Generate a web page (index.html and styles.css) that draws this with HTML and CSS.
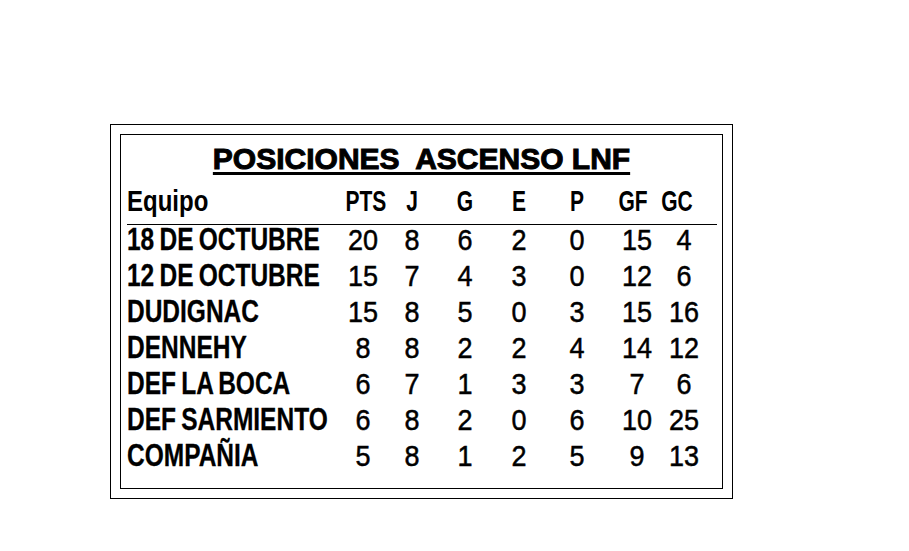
FILE: index.html
```html
<!DOCTYPE html>
<html lang="es">
<head>
<meta charset="utf-8">
<title>Posiciones Ascenso LNF</title>
<link rel="stylesheet" href="styles.css">
</head>
<body>
<div class="frame">
  <div class="panel">
    <h1 class="title"><span class="title-text">POSICIONES&nbsp; ASCENSO LNF</span></h1>
    <div class="table">
      <div class="row head">
        <span class="name">Equipo</span>
        <span class="num">PTS</span>
        <span class="num">J</span>
        <span class="num">G</span>
        <span class="num">E</span>
        <span class="num">P</span>
        <span class="num gf">GF</span>
        <span class="num gc">GC</span>
        <span></span>
      </div>
      <div class="row"><span class="name">18 DE OCTUBRE</span><span class="num">20</span><span class="num">8</span><span class="num">6</span><span class="num">2</span><span class="num">0</span><span class="num">15</span><span class="num">4</span><span></span></div>
      <div class="row"><span class="name">12 DE OCTUBRE</span><span class="num">15</span><span class="num">7</span><span class="num">4</span><span class="num">3</span><span class="num">0</span><span class="num">12</span><span class="num">6</span><span></span></div>
      <div class="row"><span class="name">DUDIGNAC</span><span class="num">15</span><span class="num">8</span><span class="num">5</span><span class="num">0</span><span class="num">3</span><span class="num">15</span><span class="num">16</span><span></span></div>
      <div class="row"><span class="name">DENNEHY</span><span class="num">8</span><span class="num">8</span><span class="num">2</span><span class="num">2</span><span class="num">4</span><span class="num">14</span><span class="num">12</span><span></span></div>
      <div class="row"><span class="name">DEF LA BOCA</span><span class="num">6</span><span class="num">7</span><span class="num">1</span><span class="num">3</span><span class="num">3</span><span class="num">7</span><span class="num">6</span><span></span></div>
      <div class="row"><span class="name">DEF SARMIENTO</span><span class="num">6</span><span class="num">8</span><span class="num">2</span><span class="num">0</span><span class="num">6</span><span class="num">10</span><span class="num">25</span><span></span></div>
      <div class="row"><span class="name">COMPAÑIA</span><span class="num">5</span><span class="num">8</span><span class="num">1</span><span class="num">2</span><span class="num">5</span><span class="num">9</span><span class="num">13</span><span></span></div>
    </div>
  </div>
</div>
</body>
</html>
```

FILE: styles.css
```css
html, body {
  margin: 0;
  padding: 0;
  background: #ffffff;
}

body {
  padding: 124px 0 0 110px;
  color: #000;
  font-family: "Liberation Sans", Arial, sans-serif;
}

.frame {
  width: 603px;
  height: 355px;
  padding: 9px;
  border: 1px solid #000;
}

.panel {
  width: 601px;
  height: 353px;
  border: 1px solid #000;
}

.title {
  margin: 0;
  padding-top: 6px;
  height: 36px;
  line-height: 36px;
  text-align: center;
  font-family: "Liberation Sans", Arial, sans-serif;
  font-weight: bold;
  font-size: 30px;
  letter-spacing: 0;
  white-space: nowrap;
  -webkit-text-stroke: 1px #000;
}

.title-text {
  text-decoration: underline;
  text-decoration-thickness: 2.5px;
  text-underline-offset: 3px;
}

.table {
  margin: 6px 0 0 6px;
  display: grid;
  grid-template-columns: 590px;
  row-gap: 6px;
}

.row {
  display: grid;
  grid-template-columns: 211px 50px 48px 58px 50px 66px 54px 40px 13px;
  height: 30px;
  line-height: 30px;
}

.row.head {
  height: 36px;
  line-height: 36px;
  border-bottom: 1px solid #000;
  margin-bottom: -6px;
  padding-bottom: 5px;
}

.name {
  font-weight: bold;
  font-size: 31px;
  word-spacing: -2px;
  white-space: nowrap;
  transform: scaleX(0.79);
  transform-origin: 0 50%;
  -webkit-text-stroke: 0.3px #000;
}

.num {
  text-align: center;
  font-size: 30px;
  white-space: nowrap;
  transform: scaleX(0.9);
  transform-origin: 50% 50%;
  -webkit-text-stroke: 0.5px #000;
}

.head span {
  font-weight: bold;
  font-size: 30px;
  word-spacing: 0;
  -webkit-text-stroke: 0;
}

.head .name {
  transform: scaleX(0.8);
}

.head .num {
  transform: scaleX(0.7);
}

.head .gf {
  margin-left: -8px;
}

.head .gc {
  margin-left: -14px;
}
```
